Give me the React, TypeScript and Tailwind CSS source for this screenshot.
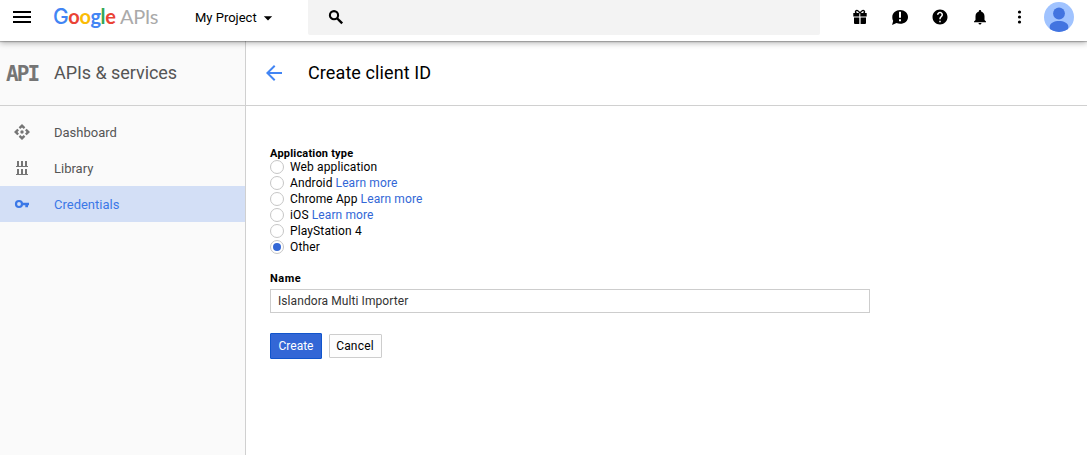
import React from "react";
import { MdMenu, MdHelp, MdNotifications, MdArrowDropDown, MdArrowBack } from "react-icons/md";

function SearchIcon() {
  return (
    <svg width="18" height="18" viewBox="0 0 18 18" fill="none" stroke="#000" strokeWidth="2.1">
      <circle cx="7" cy="7.2" r="4.1" />
      <path d="M9.8 10 L15.2 15.4" strokeWidth="2.4" />
    </svg>
  );
}

function GiftIcon() {
  return (
    <svg width="18" height="18" viewBox="0 0 18 18" fill="#000">
      <path d="M2.3 5h6v3.6h-6zM9.3 5h6.4v3.6H9.3zM3 9.6h5.3V16H4a1 1 0 0 1-1-1zM9.6 9.6H15V15a1 1 0 0 1-1 1H9.6z" />
      <path d="M8.8 5.2C8 2.6 5 1.6 4.5 3.4c-.2.9.4 1.6 1 1.8M9.2 5.2c.8-2.6 3.8-3.6 4.3-1.8.2.9-.4 1.6-1 1.8" fill="none" stroke="#000" strokeWidth="1.4" />
    </svg>
  );
}

function FeedbackIcon() {
  return (
    <svg width="18" height="18" viewBox="0 0 18 18">
      <path d="M9.2 2c4.400 0 7.800 3 7.800 6.900s-3.400 6.900-7.800 6.900c-1.300 0-2.600-.2-3.700-.7L1.100 17l1.100-4.200C1.500 11.700 1.300 10.300 1.300 8.900 1.300 5 4.800 2 9.200 2z" fill="#000" />
      <path d="M8 3.800h2v6H8zM8 11.200h2v2H8z" fill="#fff" />
    </svg>
  );
}

function Avatar() {
  return (
    <svg width="30" height="30" viewBox="0 0 30 30">
      <defs>
        <clipPath id="avatar-disc"><circle cx="15" cy="15" r="15" /></clipPath>
      </defs>
      <g clipPath="url(#avatar-disc)">
        <rect width="30" height="30" fill="#a0c3ff" />
        <circle cx="15" cy="11.500" r="5.900" fill="#4274e0" />
        <path d="M5.700 30v-5.500c0-3.500 4.800-5.500 9.300-5.500s9.300 2 9.300 5.500V30z" fill="#4274e0" />
      </g>
    </svg>
  );
}

function DashboardIcon() {
  return (
    <svg width="18" height="18" viewBox="0 0 18 18" fill="#757575">
      <path d="M9 1 12.300 4.300 10.800 6 9 4.500 7.200 6 5.700 4.300z" />
      <path d="M9 17 12.300 13.700 10.800 12 9 13.500 7.200 12 5.700 13.700z" />
      <path d="M1 9 4.300 5.700 6 7.200 4.500 9 6 10.800 4.300 12.300z" />
      <path d="M17 9 13.700 5.700 12 7.200 13.500 9 12 10.800 13.700 12.300z" />
      <circle cx="9" cy="9" r="1.700" />
    </svg>
  );
}

function LibraryIcon() {
  return (
    <svg width="18" height="18" viewBox="0 0 18 18" fill="#757575" shapeRendering="crispEdges">
      <path d="M3 7h12v1H3zM4 2h2v5H4zM8 2h2v5H8zM12 2h2v5h-2zM3 15h12v1H3zM4 10h2v5H4zM8 10h2v5H8zM12 10h2v5h-2z" />
    </svg>
  );
}

function KeyIcon() {
  return (
    <svg width="18" height="18" viewBox="0 0 18 18" fill="#3b78e7">
      <circle cx="6" cy="9" r="3" fill="none" stroke="#3b78e7" strokeWidth="2.200" />
      <path d="M9.500 7.800H16v2.400h-1v2h-2.700v-2H9.500z" />
    </svg>
  );
}

function Header() {
  return (
    <header className="relative z-10 flex h-[41px] shrink-0 bg-white shadow-[0_1px_1px_rgba(0,0,0,0.22),0_2px_6px_rgba(0,0,0,0.3)]">
      <div className="flex w-[308px] shrink-0">
        <MdMenu className="mt-[5px] ml-[10px] h-6 w-6 shrink-0" />
        <div className="ml-[19px] flex h-8 w-[106px] items-baseline pt-[2px] font-[Lato] text-[20px] leading-7 tracking-[-0.4px]">
          <span className="w-[67px] font-bold whitespace-nowrap">
            <span className="font-[Inter] text-[21px] font-medium text-[#4285f4]">G</span>
            <span className="text-[#ea4335]">o</span>
            <span className="text-[#fbbc05]">o</span>
            <span className="text-[#4285f4]">g</span>
            <span className="text-[#34a853]">l</span>
            <span className="text-[#ea4335]">e</span>
          </span>
          <span className="tracking-[-0.400px] text-[#aaa]">APIs</span>
        </div>
        <button className="ml-[36px] flex h-[35px] items-center text-[13px]">
          My Project
          <MdArrowDropDown className="ml-[1px] h-5 w-5" />
        </button>
      </div>
      <div className="h-[35px] w-[512px] shrink-0 rounded-b-[2px] bg-[#f3f3f3] pt-[8px] pl-[19px]">
        <SearchIcon />
      </div>
      <div className="flex h-[34px] items-center gap-[22px] pl-[31px]">
        <GiftIcon />
        <FeedbackIcon />
        <MdHelp className="h-[18px] w-[18px]" />
        <MdNotifications className="h-[18px] w-[18px]" />
        <svg width="18" height="18" viewBox="0 0 18 18">
          <circle cx="8.500" cy="4" r="1.600" /><circle cx="8.500" cy="9" r="1.600" /><circle cx="8.500" cy="14" r="1.600" />
        </svg>
      </div>
      <div className="ml-[15px] pt-[2px]"><Avatar /></div>
    </header>
  );
}

function NavItem({ icon, label, active = false }: { icon: React.ReactNode; label: string; active?: boolean }) {
  return (
    <a className={`flex h-9 items-center pl-[13px] text-[13px] ${active ? "bg-[#d3dff6] text-[#3b78e7]" : "text-[#555]"}`}>
      <span className="w-[41px]">{icon}</span>
      <span className="pt-[2px]">{label}</span>
    </a>
  );
}

function Option({ label, link = false, checked = false }: { label: string; link?: boolean; checked?: boolean }) {
  return (
    <label className="flex h-4 items-center tracking-[0.12px] whitespace-nowrap">
      <span className="mr-[6px] flex h-[14px] w-[14px] items-center justify-center rounded-full border border-[#c6c6c6] bg-white">
        {checked && <span className="h-2 w-2 rounded-full bg-[#3367d6]" />}
      </span>
      {label}
      {link && <a className="ml-[3px] text-[#3367d6]">Learn more</a>}
    </label>
  );
}

export default function App() {
  return (
    <div className="flex h-[455px] w-[1087px] flex-col overflow-hidden bg-white font-[Roboto,sans-serif] text-black">
      <Header />
      <div className="flex min-h-0 flex-1">
        <aside className="w-[246px] shrink-0 border-r border-[#d0d0d0] bg-[#fafafa]">
          <div className="flex h-[65px] items-center border-b border-[#d0d0d0] text-[18px] text-[#555]">
            <span className="w-[54px] pt-[3px] pl-[6px] font-['DejaVu_Sans_Mono',monospace] text-[21px] font-bold tracking-[-1.900px] text-[#757575]">API</span>
            <span className="pb-[2px] tracking-[-0.050px]">APIs &amp; services</span>
          </div>
          <nav className="pt-[8px]">
            <NavItem icon={<DashboardIcon />} label="Dashboard" />
            <NavItem icon={<LibraryIcon />} label="Library" />
            <NavItem icon={<KeyIcon />} label="Credentials" active />
          </nav>
        </aside>
        <main className="min-w-0 flex-1">
          <div className="flex h-[65px] items-center border-b border-[#d0d0d0] pl-[16px] text-[18px]">
            <MdArrowBack className="mr-[22px] h-6 w-6 text-[#4285f4]" />
            <h1 className="pb-[2px] tracking-[0.1px]">Create client ID</h1>
          </div>
          <form className="pt-[41px] pl-[24px] text-[12px]">
            <h2 className="h-[12px] text-[11px] leading-[14px] font-bold tracking-[0.200px]">Application type</h2>
            <Option label="Web application" />
            <Option label="Android" link />
            <Option label="Chrome App" link />
            <Option label="iOS" link />
            <Option label="PlayStation 4" />
            <Option label="Other" checked />
            <h2 className="mt-[17px] text-[11px] leading-[14px] font-bold tracking-[0.5px]">Name</h2>
            <div className="mt-[3px] flex h-6 w-[600px] items-center border border-[#cdcdcd] pl-[7px] tracking-[0.08px] text-[#333]">Islandora Multi Importer</div>
            <div className="mt-5 flex items-center gap-[7px]">
              <button type="button" className="h-[26px] w-[52px] rounded-[1px] border border-[#1155cc] bg-[#3367d6] text-white">Create</button>
              <button type="button" className="h-6 w-[53px] rounded-[1px] border border-[#cdcdcd] bg-[#fdfdfd] pr-[1px] tracking-[0.2px]">Cancel</button>
            </div>
          </form>
        </main>
      </div>
    </div>
  );
}
